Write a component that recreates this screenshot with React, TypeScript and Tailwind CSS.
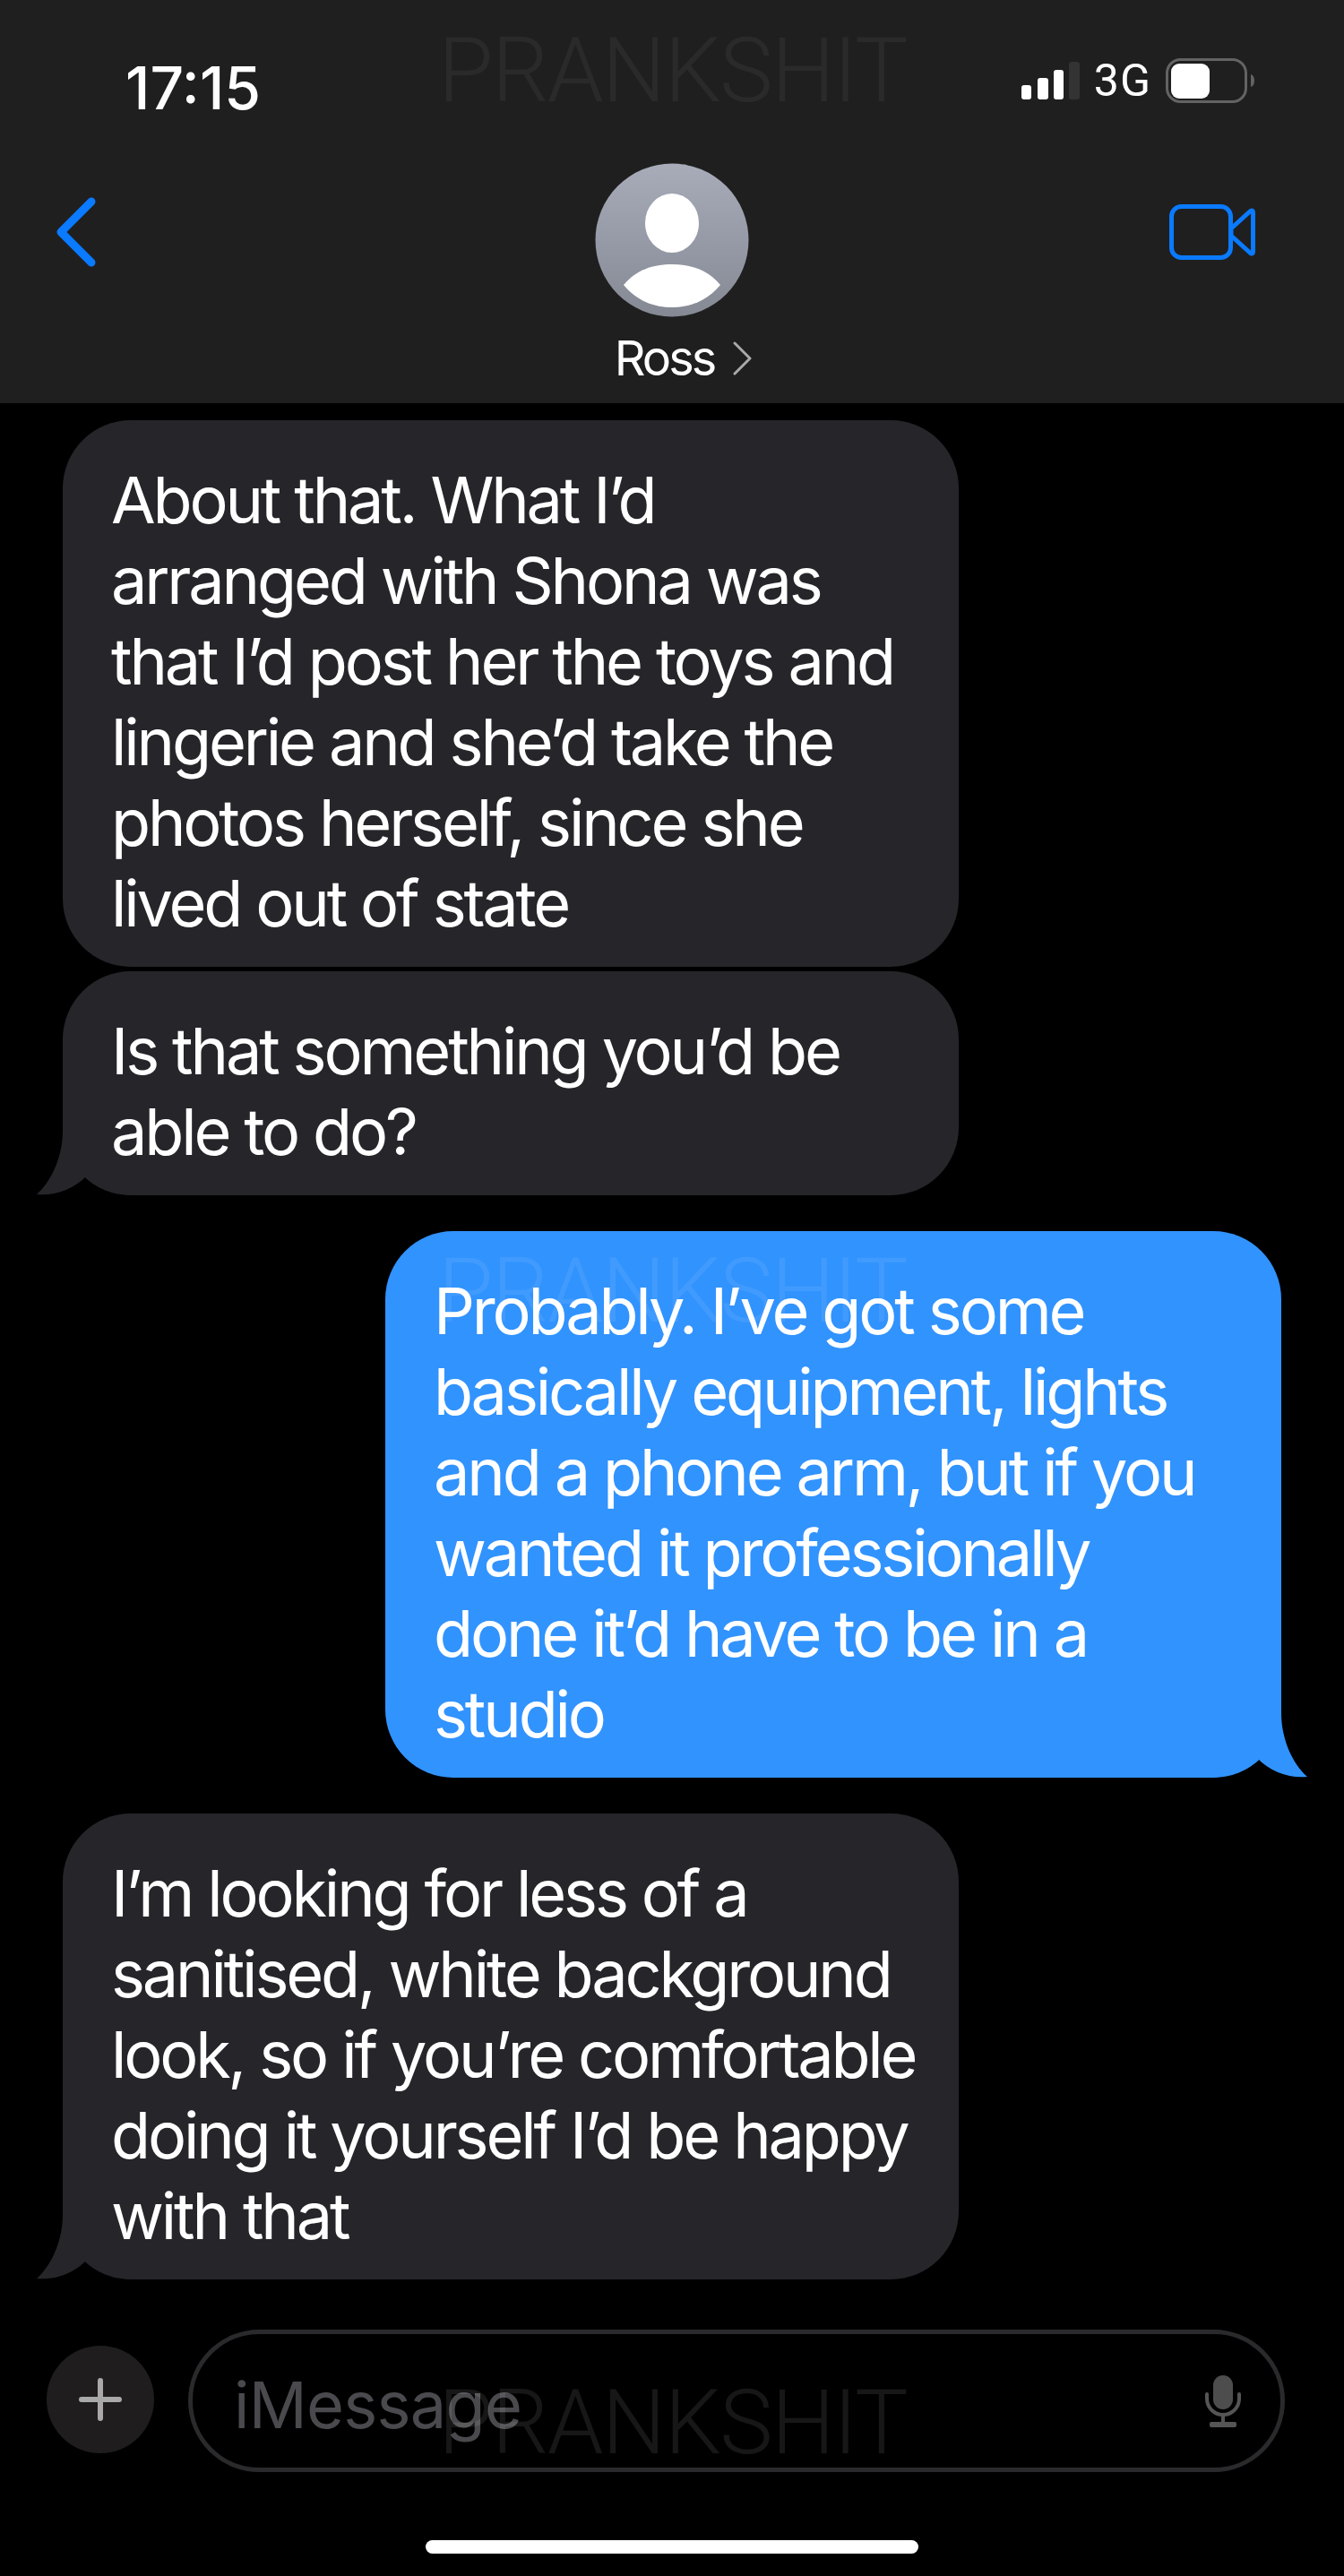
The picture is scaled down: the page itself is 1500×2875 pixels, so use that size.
const font = { fontFamily: '"Inter", "Liberation Sans", sans-serif' };

function Tail({ color, right }: { color: string; right?: boolean }) {
  return (
    <svg
      viewBox="0 0 120 94"
      className={right ? 'absolute bottom-0 right-[-30px] h-[94px] w-[120px] -scale-x-100' : 'absolute bottom-0 left-[-30px] h-[94px] w-[120px]'}
    >
      <path
        d="M30 0 L30 22 C30 50 18 78 1 93 C20 95 42 88 57 72 C70 85 90 94 110 94 L120 94 L120 0 Z"
        fill={color}
      />
    </svg>
  );
}

function Bubble({
  lines,
  sent,
  tail,
  className,
}: {
  lines: string[];
  sent?: boolean;
  tail?: boolean;
  className?: string;
}) {
  const color = sent ? '#3193fe' : '#26252a';
  return (
    <div
      className={`relative w-[1000px] rounded-[76px] pt-[44px] pr-[40px] pb-[26px] pl-[54px] text-[72px] leading-[90px] tracking-[-0.044em] text-white ${
        sent ? 'self-end bg-[#3193fe]' : 'self-start bg-[#26252a]'
      } ${className ?? ''}`}
    >
      {tail && <Tail color={color} right={sent} />}
      <div className="relative">
        {lines.map((line) => (
          <div key={line} className="whitespace-nowrap">
            {line}
          </div>
        ))}
      </div>
    </div>
  );
}

function Watermark({ className }: { className: string }) {
  return (
    <div
      className={`pointer-events-none absolute left-[489px] text-[100px] leading-[72px] font-light tracking-[-1.5px] whitespace-nowrap ${className}`}
      style={{ fontFamily: 'Roboto, "Liberation Sans", sans-serif' }}
    >
      PRANKSHIT
    </div>
  );
}

export default function App() {
  return (
    <div className="relative flex h-[2875px] w-[1500px] flex-col overflow-hidden bg-black" style={font}>
      {/* Header */}
      <div className="relative h-[450px] shrink-0 bg-[#1f1f1f] text-white">
        <div className="flex h-[182px] items-start justify-between pr-[100px] pl-[140px]">
          <div className="mt-[60px] text-[66px] leading-[76px] font-medium tracking-[0]">17:15</div>
          <div className="mt-[65px] flex items-start">
            <svg width="66" height="46" viewBox="0 0 66 46" className="mt-[4px]">
              <rect x="0" y="26" width="11" height="16" rx="3" fill="#fff" />
              <rect x="18" y="18" width="12" height="24" rx="3" fill="#fff" />
              <rect x="36" y="9" width="11" height="33" rx="3" fill="#fff" />
              <rect x="53" y="0" width="12" height="42" rx="3" fill="#333" />
            </svg>
            <div className="mt-[1px] ml-[15px] text-[50px] leading-[48px] tracking-[1px]" style={{ fontFamily: 'Roboto, sans-serif' }}>
              3G
            </div>
            <svg width="99" height="50" viewBox="0 0 99 50" className="ml-[16px]">
              <rect x="1.5" y="1.5" width="88" height="47" rx="15" fill="none" stroke="#636363" strokeWidth="3" />
              <rect x="6" y="6" width="43" height="39" rx="9" fill="#fff" />
              <path d="M95 18 C98 19 99 22 99 25 C99 28 98 31 95 32 Z" fill="#636363" />
            </svg>
          </div>
        </div>

        <svg width="45" height="78" viewBox="0 0 45 78" className="absolute top-[220px] left-[62px]">
          <path d="M40 5 L6 39 L40 73" fill="none" stroke="#0a7aff" strokeWidth="9" strokeLinecap="round" strokeLinejoin="round" />
        </svg>

        <svg width="96" height="62" viewBox="0 0 96 62" className="absolute top-[228px] left-[1305px]">
          <rect x="2.5" y="2.5" width="66" height="57" rx="11" fill="none" stroke="#0a7aff" strokeWidth="5" />
          <path d="M69 27 L90 8 C92 6 93.5 7 93.5 9 L93.5 53 C93.5 55 92 56 90 54 L69 35 Z" fill="none" stroke="#0a7aff" strokeWidth="5" strokeLinejoin="round" />
        </svg>

        <div className="flex flex-col items-center">
          <svg width="172" height="172" viewBox="0 0 172 172">
            <defs>
              <linearGradient id="avatar" x1="0" y1="0" x2="0" y2="1">
                <stop offset="0" stopColor="#a8acb9" />
                <stop offset="1" stopColor="#858994" />
              </linearGradient>
              <clipPath id="avatarClip">
                <circle cx="86" cy="86" r="85" />
              </clipPath>
            </defs>
            <circle cx="86" cy="86" r="85.5" fill="url(#avatar)" />
            <ellipse cx="86" cy="67" rx="30" ry="33" fill="#fff" />
            <path d="M32 136 C46 119 65 113 86 113 C107 113 126 119 140 136 C125 154 106 161 86 161 C66 161 47 154 32 136 Z" fill="#fff" clipPath="url(#avatarClip)" />
          </svg>
          <div className="mt-[16px] flex items-center pl-[26px] text-[54px] leading-[60px] tracking-[-0.055em]">
            <span>Ross</span>
            <svg width="22" height="38" viewBox="0 0 22 38" className="ml-[21px]">
              <path d="M2 2 L19 19 L2 36" fill="none" stroke="#aaaaaa" strokeWidth="3" strokeLinecap="round" strokeLinejoin="round" />
            </svg>
          </div>
        </div>
      </div>

      {/* Messages */}
      <div className="flex flex-col pt-[19px] pr-[70px] pl-[70px]">
        <Bubble
          lines={[
            'About that. What I’d',
            'arranged with Shona was',
            'that I’d post her the toys and',
            'lingerie and she’d take the',
            'photos herself, since she',
            'lived out of state',
          ]}
        />
        <Bubble className="mt-[5px]" tail lines={['Is that something you’d be', 'able to do?']} />
        <Bubble
          className="mt-[40px]"
          sent
          tail
          lines={[
            'Probably. I’ve got some',
            'basically equipment, lights',
            'and a phone arm, but if you',
            'wanted it professionally',
            'done it’d have to be in a',
            'studio',
          ]}
        />
        <Bubble
          className="mt-[40px]"
          tail
          lines={[
            'I’m looking for less of a',
            'sanitised, white background',
            'look, so if you’re comfortable',
            'doing it yourself I’d be happy',
            'with that',
          ]}
        />
      </div>

      {/* Input bar */}
      <div className="mt-[56px] flex items-center pl-[52px]">
        <div className="mb-[4px] flex h-[120px] w-[120px] items-center justify-center rounded-full bg-[#1f1d1e]">
          <svg width="48" height="48" viewBox="0 0 48 48">
            <path d="M24 3 V45 M3 24 H45" fill="none" stroke="#a9a9a9" strokeWidth="6" strokeLinecap="round" />
          </svg>
        </div>
        <div className="ml-[38px] flex h-[159px] w-[1224px] items-center justify-between rounded-[80px] border-[5px] border-[#2a2a2d] pr-[44px] pl-[46px]">
          <span className="pt-[8px] text-[72px] leading-[80px] tracking-[-0.01em] text-[#4a4a4e]">iMessage</span>
          <svg width="40" height="58" viewBox="0 0 40 58">
            <rect x="9" y="0" width="22" height="38" rx="11" fill="#4d4d4d" />
            <path d="M2 21 V26 C2 36 10 44 20 44 C30 44 38 36 38 26 V21" fill="none" stroke="#555555" strokeWidth="4" strokeLinecap="round" />
            <path d="M20 44 V54" fill="none" stroke="#555555" strokeWidth="4" />
            <rect x="5" y="52" width="30" height="6" rx="2" fill="#555555" />
          </svg>
        </div>
      </div>

      <div className="mx-auto mt-[76px] h-[15px] w-[550px] rounded-full bg-white" />

      <Watermark className="top-[43px] text-white/[0.05]" />
      <Watermark className="top-[1405px] text-white/[0.08]" />
      <Watermark className="top-[2668px] text-white/[0.09]" />
    </div>
  );
}
